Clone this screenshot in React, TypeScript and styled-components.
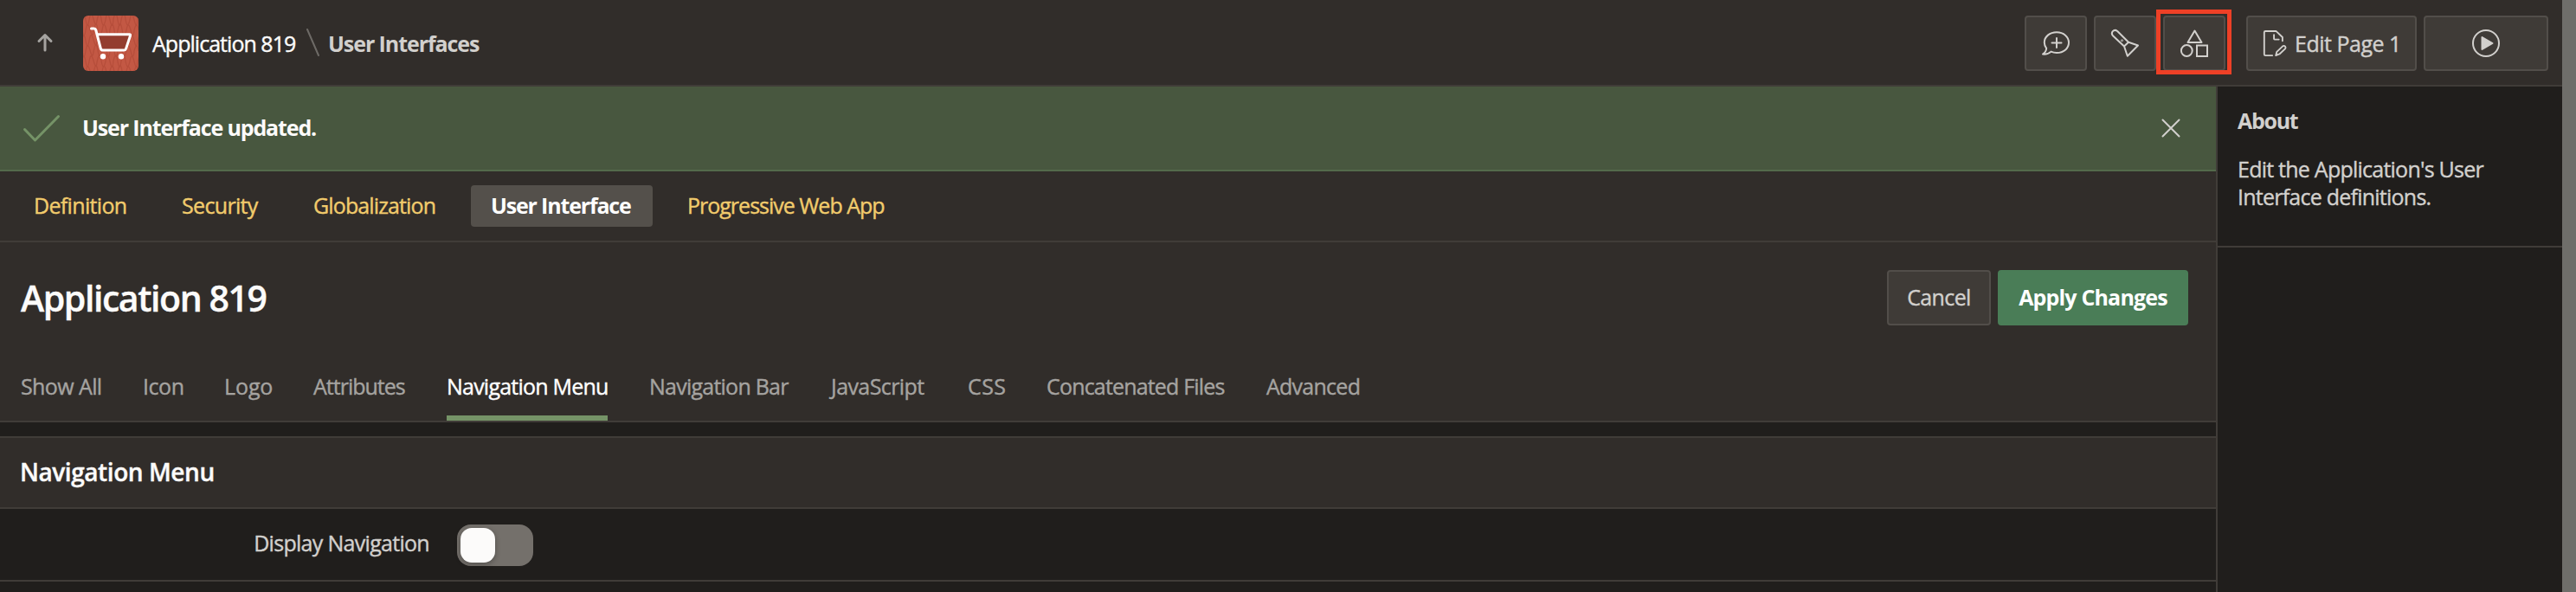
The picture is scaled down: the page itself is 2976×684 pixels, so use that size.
import React from 'react';
import styled, { createGlobalStyle, css } from 'styled-components';

const GlobalStyle = createGlobalStyle`
  * { box-sizing: border-box; }
  body {
    margin: 0;
    background: #201e1c;
    color: #d2d0cd;
    font-family: "Open Sans", "Noto Sans", sans-serif;
    font-size: 25px;
    line-height: 32px;
    overflow: hidden;
  }
  button { font: inherit; color: inherit; }
`;

const line = '2px solid #403c38';

const Screen = styled.div`
  display: flex;
  width: 2976px;
  height: 684px;
  overflow: hidden;
`;

const Page = styled.div`
  display: flex;
  flex-direction: column;
  width: 2960px;
`;

const Scrollbar = styled.div`
  width: 16px;
  background: #6f6e6a;
`;

const Header = styled.header`
  display: flex;
  align-items: center;
  justify-content: space-between;
  height: 100px;
  padding: 0 16px 0 40px;
  background: #312d2a;
  border-bottom: ${line};
`;

const Breadcrumb = styled.nav`
  display: flex;
  align-items: center;
  padding-top: 2px;
`;

const AppLogo = styled.svg`
  width: 64px;
  height: 64px;
  margin-left: 32px;
  border-radius: 6px;
`;

const Text = styled.span<{ $spacing: number; $weight?: number; $color?: string }>`
  letter-spacing: ${p => p.$spacing}px;
  font-weight: ${p => p.$weight ?? 400};
  color: ${p => p.$color ?? 'inherit'};
  -webkit-text-stroke: ${p => (p.$weight === 700 ? 0 : 0.4)}px currentColor;
  white-space: nowrap;
`;

const CrumbLink = styled.a`
  width: 178px;
  margin-left: 16px;
  color: #fcfbfa;
`;

const CrumbSeparator = styled.svg`
  width: 16px;
  height: 34px;
  margin-right: 9px;
`;

const Toolbar = styled.div`
  display: flex;
  gap: 8px;
  padding-top: 2px;
`;

const ToolButton = styled.button<{ $width: number; $spaced?: boolean }>`
  display: flex;
  align-items: center;
  justify-content: center;
  gap: 8px;
  position: relative;
  width: ${p => p.$width}px;
  height: 64px;
  margin: 0 0 0 ${p => (p.$spaced ? 16 : 0)}px;
  padding: 0;
  border: 2px solid #524e4a;
  border-radius: 4px;
  background: #3f3b37;
`;

const Highlight = styled.span`
  position: absolute;
  z-index: 1;
  inset: -9px -9px -6px -10px;
  border: 5px solid #ee4026;
`;

const Glyph = styled.svg<{ $size?: number }>`
  width: ${p => p.$size ?? 32}px;
  height: ${p => p.$size ?? 32}px;
  flex: none;
  overflow: visible;
  fill: none;
  stroke: #d2d0cd;
  stroke-width: 2;
  stroke-linecap: round;
  stroke-linejoin: round;
`;

const Body = styled.div`
  display: flex;
  height: 584px;
`;

const Main = styled.main`
  width: 2560px;
`;

const Aside = styled.aside`
  width: 400px;
  border-left: ${line};
`;

const AboutPanel = styled.section`
  height: 186px;
  padding: 23px 22px 0 23px;
  border-bottom: ${line};
`;

const AboutTitle = styled.h2`
  margin: 0 0 24px;
  font-size: 25px;
  line-height: 32px;
`;

const AboutText = styled.p`
  margin: 0;
`;

const Alert = styled.div`
  display: flex;
  align-items: center;
  height: 98px;
  padding: 0 40px 0 26px;
  background: #48573f;
  border-bottom: 2px solid #536a4b;
`;

const AlertMessage = styled.div`
  flex: 1;
  margin-left: 25px;
  padding-bottom: 2px;
  color: #fcfbfa;
`;

const SectionNav = styled.nav`
  display: flex;
  align-items: center;
  gap: 16px;
  height: 82px;
  padding-left: 15px;
  background: #312d2a;
  border-bottom: ${line};
`;

const SectionLink = styled.a<{ $width: number; $active?: boolean }>`
  width: ${p => p.$width}px;
  height: 48px;
  padding-left: 24px;
  border-radius: 4px;
  line-height: 47px;
  color: #f1cb6c;
  ${p => p.$active && css`
    background: #54504b;
    color: #fff;
    padding-left: 23px;
  `}
`;

const PageHead = styled.section`
  display: flex;
  flex-direction: column;
  justify-content: space-between;
  height: 208px;
  padding: 32px 32px 0 24px;
  background: #312d2a;
  border-bottom: ${line};
`;

const TitleRow = styled.div`
  display: flex;
  align-items: center;
  gap: 8px;
  height: 64px;
`;

const Title = styled.h1`
  flex: 1;
  margin: 0;
  font-size: 41px;
  line-height: 64px;
`;

const ActionButton = styled.button<{ $width: number; $primary?: boolean }>`
  width: ${p => p.$width}px;
  height: 64px;
  padding: 0 0 2px;
  border: 2px solid ${p => (p.$primary ? '#4a7d57' : '#524e4a')};
  border-radius: 4px;
  background: ${p => (p.$primary ? '#4a7d57' : '#3f3b37')};
  color: ${p => (p.$primary ? '#fff' : '#d2d0cd')};
`;

const Tabs = styled.div`
  display: flex;
  gap: 48px;
  height: 78px;
`;

const Tab = styled.a<{ $width: number; $active?: boolean }>`
  width: ${p => p.$width}px;
  line-height: 77px;
  color: ${p => (p.$active ? '#fff' : '#a5a3a0')};
  box-shadow: ${p => (p.$active ? 'inset 0 -6px #759367' : 'none')};
`;

const Region = styled.section`
  margin-top: 16px;
  border-top: ${line};
`;

const RegionTitle = styled.h2`
  height: 82px;
  margin: 0;
  padding-left: 23px;
  background: #312d2a;
  border-bottom: ${line};
  font-size: 28px;
  line-height: 79px;
`;

const FieldRow = styled.div`
  display: flex;
  align-items: center;
  gap: 32px;
  height: 84px;
  border-bottom: ${line};
`;

const FieldLabel = styled.label`
  width: 496px;
  padding-bottom: 4px;
  text-align: right;
`;

const Switch = styled.div`
  display: flex;
  width: 88px;
  height: 48px;
  margin-top: 2px;
  padding: 4px;
  border-radius: 16px;
  background: #74706b;
`;

const Knob = styled.div`
  width: 40px;
  height: 40px;
  border-radius: 13px;
  background: #fcfbfa;
  box-shadow: 0 2px 6px rgba(0, 0, 0, 0.3);
`;

const sectionLinks = [
  { label: 'Definition', width: 155, spacing: -0.66 },
  { label: 'Security', width: 136, spacing: -0.66 },
  { label: 'Globalization', width: 190, spacing: -0.88 },
  { label: 'User Interface', width: 210, spacing: -1.17, active: true },
  { label: 'Progressive Web App', width: 276, spacing: -1.0 },
];

const tabs = [
  { label: 'Show All', width: 93, spacing: -0.6 },
  { label: 'Icon', width: 46, spacing: -0.43 },
  { label: 'Logo', width: 55, spacing: -0.1 },
  { label: 'Attributes', width: 106, spacing: -0.99 },
  { label: 'Navigation Menu', width: 186, spacing: -0.78, active: true },
  { label: 'Navigation Bar', width: 162, spacing: -0.76 },
  { label: 'JavaScript', width: 110, spacing: -0.58 },
  { label: 'CSS', width: 43, spacing: 0.45 },
  { label: 'Concatenated Files', width: 206, spacing: -0.82 },
  { label: 'Advanced', width: 108, spacing: -0.74 },
];

const squiggle = 'q3 -13 5 -1 t4 0 q2 -12 5 -1 t4 2 q3 -15 5 -2 t5 1 q2 -13 5 0 t4 -1 q3 -12 5 1 t4 0 q3 -14 5 -1 t5 1 q2 -12 5 0 t4 0 q3 -12 5 0';

function CartLogo() {
  return (
    <AppLogo viewBox="0 0 64 64">
      <rect width="64" height="64" fill="#c35844" />
      <g fill="none" stroke="#b64e3b" strokeWidth="1.3">
        {[6, 18, 30, 42, 54, 66].map((y, i) => (
          <path key={y} d={`M${-2 - (i % 2) * 4} ${y} ${squiggle}`} />
        ))}
      </g>
      <path d="M17 22H54L49 39H21Z" fill="#933d2f" />
      <path
        d="M9.5 15h3.2q1.5 0 2 1.5L20.3 38q.5 2 2.5 2h24.5q1.7 0 2.2-1.6L54.6 23q.3-1.3-1-1.3H16.5"
        fill="none"
        stroke="#fff"
        strokeWidth="3"
        strokeLinecap="round"
        strokeLinejoin="round"
      />
      <circle cx="23" cy="47.2" r="3.2" fill="#fff" />
      <circle cx="44" cy="47.2" r="3.2" fill="#fff" />
    </AppLogo>
  );
}

export default function App() {
  return (
    <>
      <GlobalStyle />
      <Screen>
        <Page>
          <Header>
            <Breadcrumb>
              <Glyph $size={24} viewBox="0 0 24 24">
                <path d="M12 20V3M5 9.5L12 2.5L19 9.5" stroke="#a5a3a0" strokeWidth="3" />
              </Glyph>
              <CartLogo />
              <CrumbLink><Text $spacing={-0.97}>Application 819</Text></CrumbLink>
              <CrumbSeparator viewBox="0 0 16 34">
                <path d="M1 1L14 31" stroke="#6d6a66" strokeWidth="2" strokeLinecap="round" />
              </CrumbSeparator>
              <Text $spacing={-1.07} $weight={700}>User Interfaces</Text>
            </Breadcrumb>
            <Toolbar>
              <ToolButton $width={72}>
                <Glyph viewBox="0 0 32 32">
                  <path d="M5.2 21.8C3.6 19.8 2.8 17.5 2.8 15C2.8 8.4 9 3.2 17 3.2S31 8.4 31 15.2S25 27 17 27C14.5 27 12.5 26.5 10.5 25.6C8.5 27.5 5 29 1 28.6C3.5 27 5 24.5 5.2 21.8Z" />
                  <path d="M17 10V21M11.5 15.5H22.5" />
                </Glyph>
              </ToolButton>
              <ToolButton $width={72}>
                <Glyph viewBox="0 0 32 32">
                  <path d="M15 19.5L2.2 7.5C-1.2 3.8 3 -1.2 7.2 2L20 14.8L31 18.5L18.8 30.7L15 19.5ZM15 19.5L20 14.8" />
                  <circle cx="12.5" cy="12.8" r="0.4" />
                </Glyph>
              </ToolButton>
              <ToolButton $width={72}>
                <Glyph viewBox="0 0 32 32">
                  <path d="M16.5 1.5L24.5 15H8.5Z" />
                  <circle cx="7.3" cy="24.5" r="6.4" />
                  <path d="M19 18.5H31V31H19Z" strokeLinejoin="miter" />
                </Glyph>
                <Highlight />
              </ToolButton>
              <ToolButton $width={197} $spaced>
                <Glyph $size={30} viewBox="0 0 30 32">
                  <path d="M12 31H3.5Q2 31 2 29.5V2.5Q2 1 3.5 1H16.5L24.5 8.5V13M14 5.5V10.5Q14 11.3 14.8 11.3H20" />
                  <path d="M16.3 31L17.5 26.5L24.8 19.6Q26.4 18.5 27.8 19.8Q29 21.3 27.8 22.8L20.8 29.3L16.3 31Z" />
                </Glyph>
                <Text $spacing={-0.49}>Edit Page 1</Text>
              </ToolButton>
              <ToolButton $width={144}>
                <Glyph viewBox="0 0 32 32">
                  <circle cx="16" cy="16" r="15" />
                  <path d="M11.5 9V23L23.5 16Z" fill="#d2d0cd" />
                </Glyph>
              </ToolButton>
            </Toolbar>
          </Header>
          <Body>
            <Main>
              <Alert>
                <Glyph $size={44} viewBox="0 0 44 44">
                  <path d="M2.5 23.5L14.5 36L41.5 8.5" stroke="#759367" strokeWidth="3" />
                </Glyph>
                <AlertMessage><Text $spacing={-1.14} $weight={700}>User Interface updated.</Text></AlertMessage>
                <Glyph $size={24} viewBox="0 0 24 24">
                  <path d="M2.5 2.5L21.5 21.5M21.5 2.5L2.5 21.5" />
                </Glyph>
              </Alert>
              <SectionNav>
                {sectionLinks.map(l => (
                  <SectionLink key={l.label} $width={l.width} $active={l.active}>
                    <Text $spacing={l.spacing} $weight={l.active ? 700 : 400}>{l.label}</Text>
                  </SectionLink>
                ))}
              </SectionNav>
              <PageHead>
                <TitleRow>
                  <Title><Text $spacing={-1.42} $weight={600} $color="#fcfbfa">Application 819</Text></Title>
                  <ActionButton $width={120}><Text $spacing={-0.6}>Cancel</Text></ActionButton>
                  <ActionButton $width={220} $primary><Text $spacing={-0.83} $weight={700}>Apply Changes</Text></ActionButton>
                </TitleRow>
                <Tabs>
                  {tabs.map(t => (
                    <Tab key={t.label} $width={t.width} $active={t.active}>
                      <Text $spacing={t.spacing}>{t.label}</Text>
                    </Tab>
                  ))}
                </Tabs>
              </PageHead>
              <Region>
                <RegionTitle><Text $spacing={-0.43} $weight={600} $color="#fcfbfa">Navigation Menu</Text></RegionTitle>
                <FieldRow>
                  <FieldLabel><Text $spacing={-0.7}>Display Navigation</Text></FieldLabel>
                  <Switch role="switch" aria-checked="false"><Knob /></Switch>
                </FieldRow>
              </Region>
            </Main>
            <Aside>
              <AboutPanel>
                <AboutTitle><Text $spacing={-1.3} $weight={700}>About</Text></AboutTitle>
                <AboutText>
                  <Text $spacing={-0.76}>Edit the Application's User</Text>
                  <br />
                  <Text $spacing={-0.76}>Interface definitions.</Text>
                </AboutText>
              </AboutPanel>
            </Aside>
          </Body>
        </Page>
        <Scrollbar />
      </Screen>
    </>
  );
}
